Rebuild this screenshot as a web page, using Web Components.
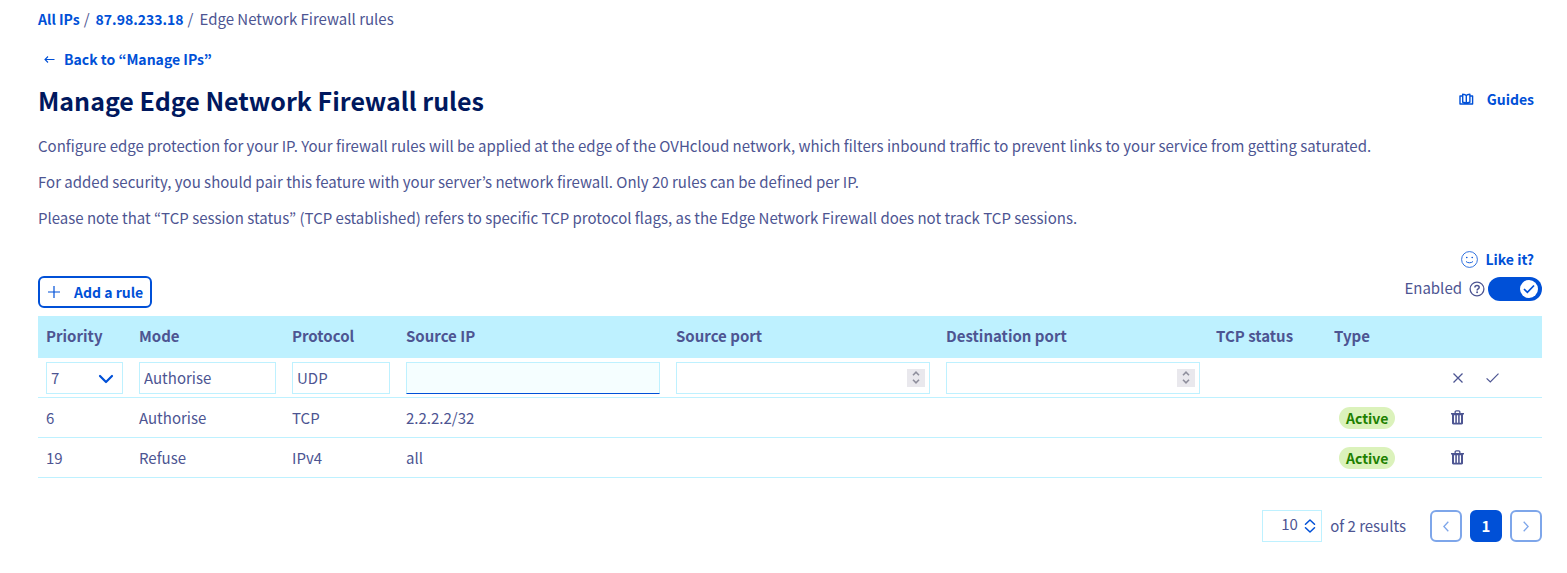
<!DOCTYPE html>
<html lang="en">
<head>
<meta charset="utf-8">
<title>Edge Network Firewall rules</title>
<style>
body { margin: 0; background: #fff; color: #4d5592; font: 15px/24px "Noto Sans CJK KR", "Open Sans", sans-serif; }
</style>
</head>
<body>
<fw-page>
  <fw-breadcrumb slot="nav"></fw-breadcrumb>
  <fw-link slot="back" icon="back">Back to “Manage IPs”</fw-link>
  <span slot="title">Manage Edge Network Firewall rules</span>
  <fw-link slot="guides" icon="book">Guides</fw-link>
  <fw-text>Configure edge protection for your IP. Your firewall rules will be applied at the edge of the OVHcloud network, which filters inbound traffic to prevent links to your service from getting saturated.</fw-text>
  <fw-text>For added security, you should pair this feature with your server’s network firewall. Only 20 rules can be defined per IP.</fw-text>
  <fw-text>Please note that “TCP session status” (TCP established) refers to specific TCP protocol flags, as the Edge Network Firewall does not track TCP sessions.</fw-text>
  <fw-link slot="feedback" icon="smile">Like it?</fw-link>
  <fw-button slot="tools">Add a rule</fw-button>
  <fw-toggle slot="tools">Enabled</fw-toggle>
  <fw-rules slot="table"></fw-rules>
  <fw-pagination slot="pages"></fw-pagination>
</fw-page>

<script>
const define = (name, html, setup) => customElements.define(name, class extends HTMLElement {
  constructor() {
    super();
    const t = document.createElement('template');
    t.innerHTML = html;
    this.attachShadow({ mode: 'open' }).append(t.content.cloneNode(true));
  }
  connectedCallback() { if (setup) setup(this, this.shadowRoot); }
});

const line = 'fill="none" stroke="currentColor"';
const icons = {
  back: [11, 9, `<path ${line} stroke-width="1.1" d="M10.5 4.5H1M4 1.5l-3 3 3 3"/>`],
  book: [15, 12, `<path ${line} stroke-width="1.4" stroke-linejoin="round" d="M3.500 3H1v8h12.600V3h-2.500M7.300 10.500C6.700 9.600 5.600 9.300 3.700 9.300V1.200c1.900 0 3 .5 3.600 1.500.6-1 1.700-1.500 3.600-1.500v8.100c-1.900 0-3 .3-3.600 1.200zM7.300 2.700v8"/>`],
  smile: [17, 17, `<circle cx="8.500" cy="8.500" r="7.900" ${line} stroke-width=".8"/><path ${line} stroke-width=".9" d="M5 10.500c1.600 1.700 5.400 1.700 7 0"/><circle cx="5.800" cy="6.500" r=".8" fill="currentColor"/><circle cx="11.200" cy="6.500" r=".8" fill="currentColor"/>`],
  plus: [12, 12, `<path ${line} stroke-width="1.200" d="M6 0v12M0 6h12"/>`],
  help: [16, 16, `<circle cx="8" cy="8" r="6.900" ${line} stroke-width="1.300"/><path ${line} stroke-width="1.500" d="M5.900 6.500c0-1.300.9-2.100 2.100-2.100s2.200.7 2.200 1.900c0 1.600-2.100 1.500-2.100 3.100"/><circle cx="8.100" cy="11.300" r=".95" fill="currentColor"/>`],
  tick: [12, 10, `<path ${line} stroke-width="1.700" d="M1 5l3.400 3.400L11 1.500"/>`],
  down: [16, 10, `<path ${line} stroke-width="2.200" stroke-linecap="round" stroke-linejoin="round" d="M2 2l6 6 6-6"/>`],
  stepup: [8, 5, `<path ${line} stroke-width="1.600" d="M1 4.200l3-3 3 3"/>`],
  stepdown: [8, 5, `<path ${line} stroke-width="1.600" d="M1 .8l3 3 3-3"/>`],
  cross: [10, 10, `<path ${line} stroke-width="1.300" d="M.5.5l9 9M9.500.5l-9 9"/>`],
  check: [13, 10, `<path ${line} stroke-width="1.200" d="M.6 5.300l3.700 3.700L12.500.7"/>`],
  trash: [13, 15, `<path fill="currentColor" fill-rule="evenodd" d="M0 3h3.500V2.200C3.500 1 4.300.3 5.300.3h2.400c1 0 1.800.7 1.800 1.900V3H13v1.400h-1v8.900c0 .7-.5 1.200-1.200 1.200H2.200c-.7 0-1.200-.5-1.200-1.200V4.400H0zM4.800 3h3.400v-.8c0-.4-.2-.6-.5-.6H5.300c-.3 0-.5.200-.5.600zM3 5.300v7.500h1.300V5.300zM5.850 5.300v7.500h1.300V5.300zM8.700 5.300v7.500H10V5.300z"/>`],
  updown: [12, 14, `<path ${line} stroke-width="1.500" stroke-linejoin="round" stroke-linecap="round" d="M1.500 5.300L6 1l4.500 4.300M1.500 8.700L6 13l4.500-4.300"/>`],
  prev: [6, 11, `<path ${line} stroke-width="1.300" d="M5.300.8L.9 5.500l4.400 4.700"/>`],
  next: [6, 11, `<path ${line} stroke-width="1.300" d="M.7.8l4.400 4.700-4.400 4.700"/>`]
};

define('fw-icon', `<style>:host{display:inline-flex;flex:none;pointer-events:none}svg{display:block}</style>`, (el, root) => {
  const icon = icons[el.getAttribute('name')];
  if (!icon || root.querySelector('svg')) return;
  const [w, h, body] = icon;
  root.innerHTML += `<svg width="${w}" height="${h}" viewBox="0 0 ${w} ${h}" aria-hidden="true">${body}</svg>`;
});

define('fw-breadcrumb', `<style>
  :host{display:block}
  ol{display:flex;margin:0;padding:0;list-style:none}
  li+li::before{content:"/";margin:0 6px 0 4px}
  a{color:#0050d7;font-size:14px;font-weight:700;text-decoration:none}
</style><nav aria-label="Breadcrumb"><ol><li><a href="#ips">All IPs</a></li><li><a href="#ip">87.98.233.18</a></li><li>Edge Network Firewall rules</li></ol></nav>`);

define('fw-link', `<style>
  :host{display:inline-flex}
  a{display:inline-flex;align-items:center;gap:7px;color:#0050d7;font-size:14px;font-weight:700;text-decoration:none}
  :host([icon=back]) a{gap:9px}
  :host([icon=book]) a{gap:13px}
</style><a href="#"><slot></slot></a>`, (el, root) => {
  const a = root.querySelector('a');
  if (!a.querySelector('fw-icon')) a.innerHTML = `<fw-icon name="${el.getAttribute('icon')}"></fw-icon><slot></slot>`;
});

define('fw-text', `<style>:host{display:block;margin-bottom:12px}p{margin:0}</style><p><slot></slot></p>`);

define('fw-button', `<style>
  :host{display:inline-flex}
  button{display:flex;align-items:center;gap:14px;height:32px;padding:0 7px 0 8px;border:2px solid #0050d7;border-radius:6px;background:#fff;color:#0050d7;font:inherit;font-size:14px;font-weight:700}
</style><button type="button"><fw-icon name="plus"></fw-icon><slot></slot></button>`);

define('fw-toggle', `<style>
  :host{display:flex;align-items:center;height:26px}
  label{margin:0 7px 2px 0}
  .track{position:relative;display:block;width:54px;height:24px;margin-left:3px}
  input{appearance:none;display:block;width:54px;height:24px;margin:0;border-radius:12px;background:#0050d7}
  .knob{position:absolute;right:4px;top:3px;width:18px;height:18px;border-radius:50%;background:#fff;color:#0050d7;display:grid;place-items:center;pointer-events:none}
</style><label for="on"><slot></slot></label><fw-icon name="help"></fw-icon><span class="track"><input id="on" type="checkbox" role="switch" checked><span class="knob"><fw-icon name="tick"></fw-icon></span></span>`);

define('fw-badge', `<style>
  :host{display:inline-block;margin-left:5px;padding:0 7px;border-radius:11px;background:#dbf2bb;color:#1d8000;font-size:14px;font-weight:700;line-height:22px}
</style><slot></slot>`);

const port = id => `<div class="field"><input type="number" aria-labelledby="${id}"><span class="steps"><button type="button" tabindex="-1" aria-label="Increase"><fw-icon name="stepup"></fw-icon></button><button type="button" tabindex="-1" aria-label="Decrease"><fw-icon name="stepdown"></fw-icon></button></span></div>`;
const rule = (n, mode, proto, ip) => `<tr><td>${n}</td><td>${mode}</td><td>${proto}</td><td>${ip}</td><td></td><td></td><td></td><td><fw-badge>Active</fw-badge></td><td><div class="actions"><button type="button" aria-label="Delete rule ${n}"><fw-icon name="trash"></fw-icon></button></div></td></tr>`;

define('fw-rules', `<style>
  :host{display:block}
  table{width:100%;table-layout:fixed;border-collapse:separate;border-spacing:0}
  .c1{width:93px}.c2{width:153px}.c3{width:114px}.c7{width:118px}.c8{width:116px}.c9{width:100px}
  th,td{box-sizing:border-box;padding:0 8px;text-align:left;vertical-align:middle}
  th{height:42px;padding-bottom:2px;background:#bef1ff;font-weight:700}
  td{height:40px;border-bottom:1px solid #bef1ff}
  .field{position:relative;display:flex;align-items:center;box-sizing:border-box;height:32px;border:1px solid #bef1ff}
  .active{background:#f5feff;border-bottom-color:#0050d7}
  select,input{appearance:none;box-sizing:border-box;flex:1;min-width:0;width:100%;height:30px;margin:0;padding:0 4px;border:0;outline:0;background:none;color:inherit;font:inherit}
  input::-webkit-inner-spin-button{appearance:none;margin:0}
  .field>fw-icon{position:absolute;right:8px;top:11px;color:#0050d7}
  .steps{display:flex;flex-direction:column;justify-content:center;gap:2px;width:18px;height:18px;margin-right:4px;background:#e9e8ed;color:#8f8f9d}
  .steps button{display:flex;justify-content:center;width:18px;height:6px;align-items:center}
  button{padding:0;border:0;background:none;color:inherit}
  .actions{display:flex;gap:20px}
  .actions button{display:flex;justify-content:center;align-items:center;width:15px;height:16px}
</style>
<table>
  <colgroup><col class="c1"><col class="c2"><col class="c3"><col><col><col><col class="c7"><col class="c8"><col class="c9"></colgroup>
  <thead><tr><th id="priority">Priority</th><th id="mode">Mode</th><th id="protocol">Protocol</th><th id="ip">Source IP</th><th id="source">Source port</th><th id="dest">Destination port</th><th>TCP status</th><th>Type</th><th></th></tr></thead>
  <tbody>
    <tr>
      <td><div class="field"><select aria-labelledby="priority"><option>7</option></select><fw-icon name="down"></fw-icon></div></td>
      <td><div class="field"><select aria-labelledby="mode"><option>Authorise</option></select></div></td>
      <td><div class="field"><select aria-labelledby="protocol"><option>UDP</option></select></div></td>
      <td><div class="field active"><input type="text" aria-labelledby="ip"></div></td>
      <td>${port('source')}</td><td>${port('dest')}</td><td></td><td></td>
      <td><div class="actions"><button type="button" aria-label="Cancel"><fw-icon name="cross"></fw-icon></button><button type="button" aria-label="Confirm"><fw-icon name="check"></fw-icon></button></div></td>
    </tr>
    ${rule(6, 'Authorise', 'TCP', '2.2.2.2/32')}${rule(19, 'Refuse', 'IPv4', 'all')}
  </tbody>
</table>`);

define('fw-pagination', `<style>
  :host{display:flex;justify-content:flex-end;align-items:center}
  .size{position:relative;box-sizing:border-box;width:60px;height:32px;margin-right:8px;border:1px solid #bef1ff}
  select{appearance:none;display:block;width:100%;height:26px;padding:0 0 0 18px;border:0;background:none;color:inherit;font:inherit}
  .size fw-icon{position:absolute;right:5px;top:8px;color:#0050d7}
  nav{display:flex;gap:8px;margin-left:24px}
  button{display:grid;place-items:center;width:32px;height:32px;padding:0;border:2px solid #0050d7;border-radius:6px;background:#fff;color:#0050d7;font:inherit;font-weight:700}
  button:disabled{opacity:.5}
  .current{background:#0050d7;color:#fff}
</style>
<div class="size"><select id="size" aria-label="Results per page"><option>10</option></select><fw-icon name="updown"></fw-icon></div>
<label for="size">of 2 results</label>
<nav aria-label="Pages"><button type="button" disabled aria-label="Previous"><fw-icon name="prev"></fw-icon></button><button type="button" class="current" aria-current="page">1</button><button type="button" disabled aria-label="Next"><fw-icon name="next"></fw-icon></button></nav>`);

define('fw-page', `<style>
  :host{display:block;padding:7px 25px 31px 38px}
  .back{display:flex;margin:16px 0 9px 6px}
  header{display:flex;justify-content:space-between;align-items:center;padding-right:8px}
  h1{margin:0;color:#00185e;font-size:25px;line-height:40px}
  ::slotted([slot=guides]){margin-bottom:2px}
  .intro{margin-top:14px}
  .feedback{display:flex;justify-content:flex-end;margin:17px 8px 5px 0}
  .tools{display:flex;justify-content:space-between;align-items:flex-start;margin-bottom:8px}
  footer{margin-top:32px}
</style>
<slot name="nav"></slot>
<div class="back"><slot name="back"></slot></div>
<header><h1><slot name="title"></slot></h1><slot name="guides"></slot></header>
<div class="intro"><slot></slot></div>
<div class="feedback"><slot name="feedback"></slot></div>
<div class="tools"><slot name="tools"></slot></div>
<slot name="table"></slot>
<footer><slot name="pages"></slot></footer>`);
</script>
</body>
</html>
